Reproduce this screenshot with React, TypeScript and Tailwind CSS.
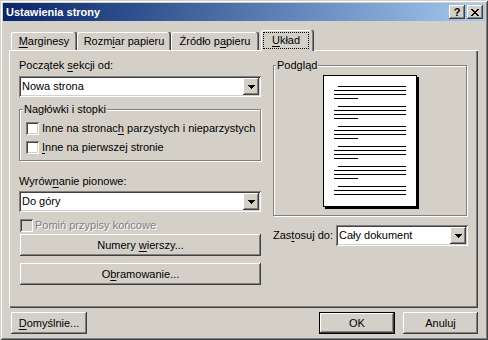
import React from "react";

const raised =
  "shadow-[inset_-1px_-1px_0_#404040,inset_1px_1px_0_#fff,inset_-2px_-2px_0_#808080,inset_2px_2px_0_#d4d0c8]";
const sunken =
  "shadow-[inset_1px_1px_0_#808080,inset_-1px_-1px_0_#fff,inset_2px_2px_0_#404040,inset_-2px_-2px_0_#d4d0c8]";

function U({ children }: { children: React.ReactNode }) {
  return <span className="underline decoration-1 underline-offset-[2px]">{children}</span>;
}

function Arrow() {
  return (
    <svg width="7" height="4" viewBox="0 0 7 4">
      <path d="M0 0h7v1h-1v1h-1v1h-1v1h-1v-1h-1v-1h-1v-1h-1z" fill="#000" />
    </svg>
  );
}

function Combo({ text, className = "" }: { text: string; className?: string }) {
  return (
    <div className={`flex items-center h-[21px] bg-white ${sunken} ${className}`}>
      <span className="flex-1 pl-[3px] leading-[13px] whitespace-nowrap">{text}</span>
      <div
        className={`w-[16px] h-[17px] mr-[2px] bg-[#d4d0c8] flex items-center justify-center ${raised}`}
      >
        <Arrow />
      </div>
    </div>
  );
}

function Check({ disabled = false }: { disabled?: boolean }) {
  return (
    <div
      className={`w-[13px] h-[13px] shrink-0 ${disabled ? "bg-[#d4d0c8]" : "bg-white"} ${sunken}`}
    />
  );
}

function Button({
  children,
  className = "",
}: {
  children: React.ReactNode;
  className?: string;
}) {
  return (
    <div
      className={`h-[22px] flex items-center justify-center bg-[#d4d0c8] leading-[13px] ${raised} ${className}`}
    >
      <span className="whitespace-nowrap">{children}</span>
    </div>
  );
}

function Paragraph({ last = false }: { last?: boolean }) {
  return (
    <div className="flex flex-col gap-[3px]">
      <div className="h-[1px] bg-black ml-[14px] w-[68px]" />
      <div className="h-[1px] bg-black ml-[10px] w-[72px]" />
      <div className="h-[1px] bg-black ml-[10px] w-[72px]" />
      {!last && <div className="h-[1px] bg-black ml-[10px] w-[24px]" />}
    </div>
  );
}

export default function App() {
  return (
    <div className="w-[488px] h-[340px] bg-[#d4d0c8] p-[3px] flex flex-col font-['Liberation_Sans',Arial,sans-serif] text-[11px] text-black shadow-[inset_1px_1px_0_#d4d0c8,inset_-1px_-1px_0_#404040,inset_2px_2px_0_#fff,inset_-2px_-2px_0_#808080]">
      {/* Title bar */}
      <div className="h-[18px] shrink-0 flex items-center justify-between bg-linear-to-r from-[#0a246a] to-[#a6caf0] pl-[3px] pr-[2px]">
        <span className="text-white font-bold leading-[13px]">Ustawienia strony</span>
        <div className="flex gap-[2px]">
          <div
            className={`w-[16px] h-[14px] bg-[#d4d0c8] flex items-center justify-center font-bold text-[11px] leading-[11px] ${raised}`}
          >
            ?
          </div>
          <div
            className={`w-[16px] h-[14px] bg-[#d4d0c8] flex items-center justify-center ${raised}`}
          >
            <svg width="8" height="7" viewBox="0 0 8 7">
              <path
                d="M0 0h2v1h1v1h2v-1h1v-1h2v1h-1v1h-1v1h-1v1h1v1h1v1h1v1h-2v-1h-1v-1h-2v1h-1v1h-2v-1h1v-1h1v-1h1v-1h-1v-1h-1v-1h-1z"
                fill="#000"
              />
            </svg>
          </div>
        </div>
      </div>

      {/* Tabs */}
      <div className="mt-[9px] h-[20px] flex items-end pl-[8px] relative z-10">
        <div className="w-[66px] h-[18px] flex items-center justify-center rounded-t-[2px] shadow-[inset_-1px_0_0_#404040,inset_-2px_0_0_#808080,inset_1px_1px_0_#fff]">
          <span className="leading-[13px]">
            <U>M</U>arginesy
          </span>
        </div>
        <div className="w-[94px] h-[18px] flex items-center justify-center rounded-t-[2px] shadow-[inset_-1px_0_0_#404040,inset_-2px_0_0_#808080,inset_1px_1px_0_#fff]">
          <span className="leading-[13px]">
            Rozm<U>i</U>ar papieru
          </span>
        </div>
        <div className="w-[88px] h-[18px] flex items-center justify-center rounded-t-[2px] shadow-[inset_-1px_0_0_#404040,inset_-2px_0_0_#808080,inset_1px_1px_0_#fff]">
          <span className="leading-[13px]">
            Źródło p<U>a</U>pieru
          </span>
        </div>
        <div className="ml-[2px] w-[53px] h-[21px] -mb-[1px] bg-[#d4d0c8] flex items-start pl-[2px] pt-[2px] rounded-t-[2px] shadow-[inset_-1px_0_0_#404040,inset_-2px_0_0_#808080,inset_1px_1px_0_#fff]">
          <div className="w-[46px] h-[17px] border border-dotted border-black flex items-center justify-center">
            <span className="leading-[13px]">
              <U>U</U>kład
            </span>
          </div>
        </div>
      </div>

      {/* Panel */}
      <div className="ml-[6px] w-[469px] h-[258px] shrink-0 flex pl-[10px] pt-[9px] gap-[12px] shadow-[inset_1px_1px_0_#fff,inset_-1px_-1px_0_#404040,inset_-2px_-2px_0_#808080]">
        {/* Left column */}
        <div className="w-[242px] flex flex-col">
          <div className="leading-[13px] h-[13px]">
            Początek <U>s</U>ekcji od:
          </div>
          <Combo text="Nowa strona" className="mt-[4px]" />
          <div className="relative mt-[12px] border border-[#808080] shadow-[1px_1px_0_#fff,inset_1px_1px_0_#fff] pl-[6px] pt-[12px] pb-[6px] flex flex-col gap-[6px]">
            <span className="absolute -top-[7px] left-[3px] px-[1px] bg-[#d4d0c8] leading-[13px]">
              Nagłówki i stopki
            </span>
            <div className="flex items-center gap-[3px] h-[13px]">
              <Check />
              <span className="leading-[13px] whitespace-nowrap">
                Inne na stronac<U>h</U> parzystych i nieparzystych
              </span>
            </div>
            <div className="flex items-center gap-[3px] h-[13px]">
              <Check />
              <span className="leading-[13px]">
                <U>I</U>nne na pierwszej stronie
              </span>
            </div>
          </div>
          <div className="mt-[14px] leading-[13px] h-[13px]">
            Wyrów<U>n</U>anie pionowe:
          </div>
          <Combo text="Do góry" className="mt-[3px]" />
          <div className="mt-[7px] ml-[1px] flex items-center gap-[2px] h-[13px]">
            <Check disabled />
            <span className="leading-[13px] text-[#808080] [text-shadow:1px_1px_0_#fff]">
              Pomiń przypisy końcowe
            </span>
          </div>
          <Button className="mt-[2px] ml-[1px]">
            Numery <U>w</U>ierszy...
          </Button>
          <Button className="mt-[7px] ml-[1px]">
            O<U>b</U>ramowanie...
          </Button>
        </div>

        {/* Right column */}
        <div className="w-[195px] flex flex-col">
          <div className="relative mt-[6px] w-[194px] border border-[#808080] shadow-[1px_1px_0_#fff,inset_1px_1px_0_#fff] pt-[9px] pb-[8px] flex justify-center">
            <span className="absolute -top-[7px] left-[2px] px-[1px] bg-[#d4d0c8] leading-[13px]">
              Podgląd
            </span>
            <div className="w-[94px] h-[132px] bg-white border border-black shadow-[2px_2px_0_#000] pt-[10px] flex flex-col gap-[7px]">
              <Paragraph />
              <Paragraph />
              <Paragraph />
              <Paragraph />
              <Paragraph />
              <Paragraph last />
            </div>
          </div>
          <div className="mt-[9px] flex items-center justify-between">
            <span className="leading-[13px]">
              Zas<U>t</U>osuj do:
            </span>
            <Combo text="Cały dokument" className="w-[132px]" />
          </div>
        </div>
      </div>

      {/* Bottom buttons */}
      <div className="mt-[4px] flex items-center justify-between">
        <Button className="ml-[8px] w-[76px]">
          <U>D</U>omyślnie...
        </Button>
        <div className="flex gap-[8px] mr-[7px]">
          <Button className="w-[76px] border border-black">OK</Button>
          <Button className="w-[75px]">Anuluj</Button>
        </div>
      </div>
    </div>
  );
}
